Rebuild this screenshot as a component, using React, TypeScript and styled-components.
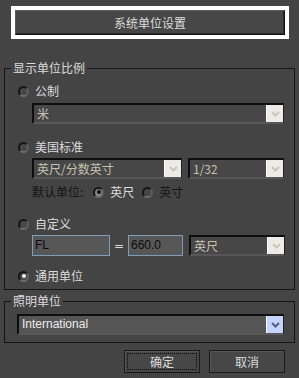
import styled, { createGlobalStyle } from "styled-components";

const GlobalStyle = createGlobalStyle`
  html, body { margin: 0; padding: 0; background: #444444; }
  body {
    font-family: "Noto Sans CJK SC", "DejaVu Sans", sans-serif;
    font-size: 12px;
    line-height: 14px;
    color: #dcdcdc;
  }
`;

const Page = styled.div`
  width: 299px;
  height: 378px;
  overflow: hidden;
  display: flex;
  flex-direction: column;
`;

const TopFrame = styled.div`
  margin: 6px 10px 0 11px;
  height: 25px;
  border: 4px solid #ffffff;
  display: flex;
`;

const TopButton = styled.button`
  flex: 1;
  margin: 0;
  padding: 0;
  font: inherit;
  font-size: 12px;
  color: #dcdcdc;
  background: #474747;
  border: 1px solid;
  border-color: #5c5c5c #111111 #111111 #5c5c5c;
  box-shadow: inset -1px -1px 0 #2a2a2a;
`;

const Group = styled.fieldset<{ $mt: number }>`
  margin: ${(p) => p.$mt}px 4px 0 4px;
  padding: 0;
  border: 1px solid #151515;
  min-width: 0;
`;

const Legend = styled.legend`
  margin-left: 6px;
  padding: 0 2px;
  height: 14px;
  line-height: 14px;
  font-size: 12px;
  color: #dcdcdc;
`;

const Column = styled.div`
  display: flex;
  flex-direction: column;
  padding: 0 0 6px 13px;
`;

const Row = styled.div<{ $mt: number; $ml?: number; $gap?: number }>`
  display: flex;
  align-items: center;
  margin-top: ${(p) => p.$mt}px;
  margin-left: ${(p) => p.$ml ?? 0}px;
  gap: ${(p) => p.$gap ?? 6}px;
`;

const RadioRow = styled.label<{ $mt?: number; $ml?: number }>`
  display: flex;
  align-items: center;
  height: 14px;
  gap: 6px;
  margin-top: ${(p) => p.$mt ?? 0}px;
  margin-left: ${(p) => p.$ml ?? 0}px;
  line-height: 14px;
`;

const RadioCircle = styled.span<{ $dot?: "dark" | "light" }>`
  width: 11px;
  height: 11px;
  box-sizing: border-box;
  border-radius: 50%;
  border: 2px solid;
  border-color: #161616 #5e5e5e #6a6a6a #161616;
  background: ${(p) => (p.$dot === "dark" ? "#8a8a8a" : "#474747")};
  display: grid;
  place-items: center;

  &::after {
    content: "";
    width: 4px;
    height: 4px;
    border-radius: 50%;
    display: ${(p) => (p.$dot ? "block" : "none")};
    background: ${(p) => (p.$dot === "dark" ? "#0c0c0c" : "#f0f0f0")};
  }
`;

const Label = styled.span<{ $color?: string }>`
  color: ${(p) => p.$color ?? "#dcdcdc"};
  line-height: 14px;
  white-space: nowrap;
`;

const Spacer = styled.span<{ $w: number }>`
  width: ${(p) => p.$w}px;
  flex: none;
`;

const SelectBox = styled.div<{ $w: number }>`
  width: ${(p) => p.$w}px;
  height: 21px;
  box-sizing: border-box;
  display: flex;
  border-style: solid;
  border-width: 2px 1px 2px 2px;
  border-color: #0e0e0e #202020 #575757 #0e0e0e;
  background: #474747;
`;

const SelectText = styled.span<{ $on?: boolean }>`
  flex: 1;
  padding-left: 3px;
  line-height: 17px;
  font-size: 12px;
  font-family: ${(p) =>
    p.$on ? '"Liberation Sans", sans-serif' : '"Noto Sans CJK SC", sans-serif'};
  color: ${(p) => (p.$on ? "#ececec" : "#c6c2b0")};
  background: ${(p) => (p.$on ? "#555555" : "transparent")};
  white-space: nowrap;
  overflow: hidden;
`;

const ArrowButton = styled.span<{ $on?: boolean }>`
  width: 17px;
  height: 17px;
  display: grid;
  place-items: center;
  background: ${(p) => (p.$on ? "#c4d4fb" : "#ecebe5")};
  border-left: 1px solid ${(p) => (p.$on ? "#ffffff" : "#fbfbf8")};
  box-sizing: border-box;
`;

const TextInput = styled.div<{ $w: number }>`
  width: ${(p) => p.$w}px;
  height: 21px;
  box-sizing: border-box;
  border: 1px solid #7f9db9;
  background: #575757;
  color: #0c0c0c;
  font-family: "Liberation Sans", sans-serif;
  font-size: 12px;
  line-height: 19px;
  padding-left: 2px;
`;

const Equals = styled.span`
  width: 12px;
  margin: 0 3px;
  text-align: center;
  color: #dcdcdc;
  font-family: "DejaVu Sans", sans-serif;
  font-size: 12px;
`;

const ButtonRow = styled.div`
  display: flex;
  justify-content: flex-end;
  gap: 9px;
  margin-top: 7px;
  padding-right: 14px;
`;

const DialogButton = styled.button<{ $focus?: boolean }>`
  width: 76px;
  height: 23px;
  margin: 0;
  padding: 0;
  font: inherit;
  font-size: 12px;
  color: #dcdcdc;
  background: #474747;
  border: 1px solid #1a1a1a;
  box-shadow: inset 1px 1px 0 #555555;
  outline: ${(p) => (p.$focus ? "1px dotted #0a0a0a" : "none")};
  outline-offset: -4px;
`;

const Chevron = ({ on }: { on?: boolean }) => (
  <svg width="9" height="6" viewBox="0 0 9 6">
    <polyline
      points="1,1 4.5,4.5 8,1"
      fill="none"
      stroke={on ? "#4d6185" : "#c8c6bc"}
      strokeWidth="2"
    />
  </svg>
);

const Select = ({ w, text, on }: { w: number; text: string; on?: boolean }) => (
  <SelectBox $w={w}>
    <SelectText $on={on}>{text}</SelectText>
    <ArrowButton $on={on}>
      <Chevron on={on} />
    </ArrowButton>
  </SelectBox>
);

export default function App() {
  return (
    <Page>
      <GlobalStyle />
      <TopFrame>
        <TopButton>系统单位设置</TopButton>
      </TopFrame>

      <Group $mt={22}>
        <Legend>显示单位比例</Legend>
        <Column>
          <RadioRow $mt={9}>
            <RadioCircle />
            <Label>公制</Label>
          </RadioRow>
          <Row $mt={5} $ml={14}>
            <Select w={252} text="米" />
          </Row>

          <RadioRow $mt={16}>
            <RadioCircle />
            <Label>美国标准</Label>
          </RadioRow>
          <Row $mt={4} $ml={14} $gap={6}>
            <Select w={150} text="英尺/分数英寸" />
            <Select w={96} text="1/32" />
          </Row>
          <Row $mt={6} $ml={14} $gap={0}>
            <Label $color="#151515">默认单位:</Label>
            <RadioRow $ml={10}>
              <RadioCircle $dot="dark" />
              <Label>英尺</Label>
            </RadioRow>
            <RadioRow $ml={8}>
              <RadioCircle />
              <Label $color="#151515">英寸</Label>
            </RadioRow>
          </Row>

          <RadioRow $mt={18}>
            <RadioCircle />
            <Label>自定义</Label>
          </RadioRow>
          <Row $mt={4} $ml={14} $gap={0}>
            <TextInput $w={78}>FL</TextInput>
            <Equals>=</Equals>
            <TextInput $w={55}>660.0</TextInput>
            <Spacer $w={6} />
            <Select w={96} text="英尺" />
          </Row>

          <RadioRow $mt={13}>
            <RadioCircle $dot="light" />
            <Label>通用单位</Label>
          </RadioRow>
        </Column>
      </Group>

      <Group $mt={4}>
        <Legend>照明单位</Legend>
        <Column style={{ paddingLeft: 12, paddingBottom: 7 }}>
          <Row $mt={6}>
            <Select w={267} text="International" on />
          </Row>
        </Column>
      </Group>

      <ButtonRow>
        <DialogButton $focus>确定</DialogButton>
        <DialogButton>取消</DialogButton>
      </ButtonRow>
    </Page>
  );
}
